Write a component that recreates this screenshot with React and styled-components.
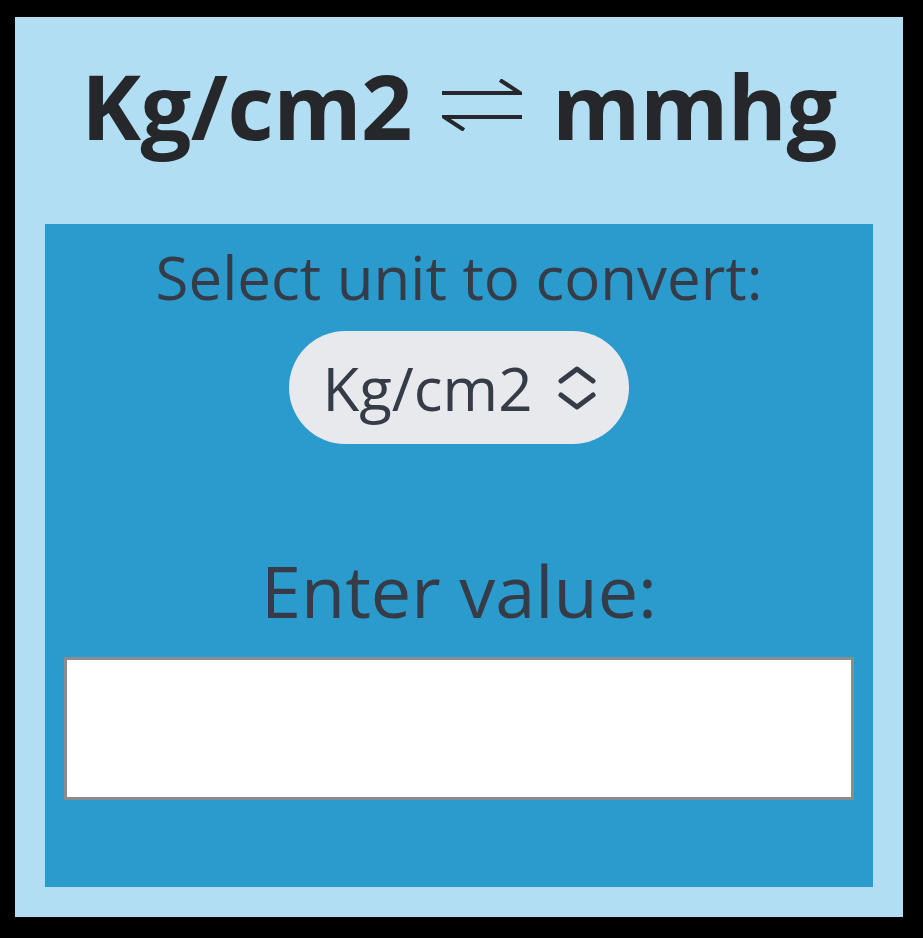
import styled, { createGlobalStyle } from "styled-components";

const GlobalStyle = createGlobalStyle`
  html, body {
    margin: 0;
    background: #000;
  }
  body {
    padding: 17px 20px 21px 15px;
    font-family: "Open Sans", "Liberation Sans", sans-serif;
  }
`;

const Panel = styled.div`
  box-sizing: border-box;
  width: 888px;
  height: 900px;
  background: #b1def2;
  padding: 0 30px 30px;
  display: flex;
  flex-direction: column;
`;

const Title = styled.h1`
  box-sizing: border-box;
  margin: 0;
  height: 207px;
  padding-bottom: 32px;
  display: flex;
  align-items: center;
  justify-content: center;
  gap: 30px;
  font-size: 90px;
  font-weight: 700;
  color: #25272b;
  letter-spacing: -0.5px;
`;

const Swap = styled.svg`
  width: 80px;
  height: 52px;
  flex-shrink: 0;
`;

const Converter = styled.div`
  flex: 1;
  background: #2a9bcc;
  display: flex;
  flex-direction: column;
  align-items: center;
  padding: 17px 19px 0;
  color: #353b47;
`;

const Label = styled.label`
  font-size: ${(p) => p.size}px;
  line-height: 1.2;
  margin-top: ${(p) => p.top || 0}px;
`;

const UnitSelect = styled.div`
  margin-top: 18px;
  height: 113px;
  box-sizing: border-box;
  padding: 0 32px 0 34px;
  display: flex;
  align-items: center;
  gap: 25px;
  border-radius: 57px;
  background: #e8e9ed;
  font-size: 60px;
  color: #353b47;
`;

const ValueInput = styled.input`
  margin-top: 24px;
  box-sizing: border-box;
  width: 790px;
  height: 143px;
  border: 3px solid #8b8b8f;
  background: #fff;
  font-size: 48px;
  font-family: inherit;
  padding: 0 16px;
  outline: none;
`;

const Chevrons = () => (
  <svg width="40" height="48" viewBox="0 0 40 48" fill="none" stroke="#353b47" strokeWidth="5" strokeLinecap="round" strokeLinejoin="round">
    <path d="M4 17 L20 5 L36 17" />
    <path d="M4 31 L20 43 L36 31" />
  </svg>
);

export default function App() {
  return (
    <>
      <GlobalStyle />
      <Panel>
        <Title>
          <span>Kg/cm2</span>
          <Swap viewBox="0 0 80 52" fill="none" stroke="#25272b" strokeWidth="4">
            <path d="M0 14 H78 L58 1" />
            <path d="M80 38 H2 L22 51" />
          </Swap>
          <span>mmhg</span>
        </Title>
        <Converter>
          <Label size={60}>Select unit to convert:</Label>
          <UnitSelect>
            <span>Kg/cm2</span>
            <Chevrons />
          </UnitSelect>
          <Label size={72} top={103}>Enter value:</Label>
          <ValueInput type="text" />
        </Converter>
      </Panel>
    </>
  );
}
